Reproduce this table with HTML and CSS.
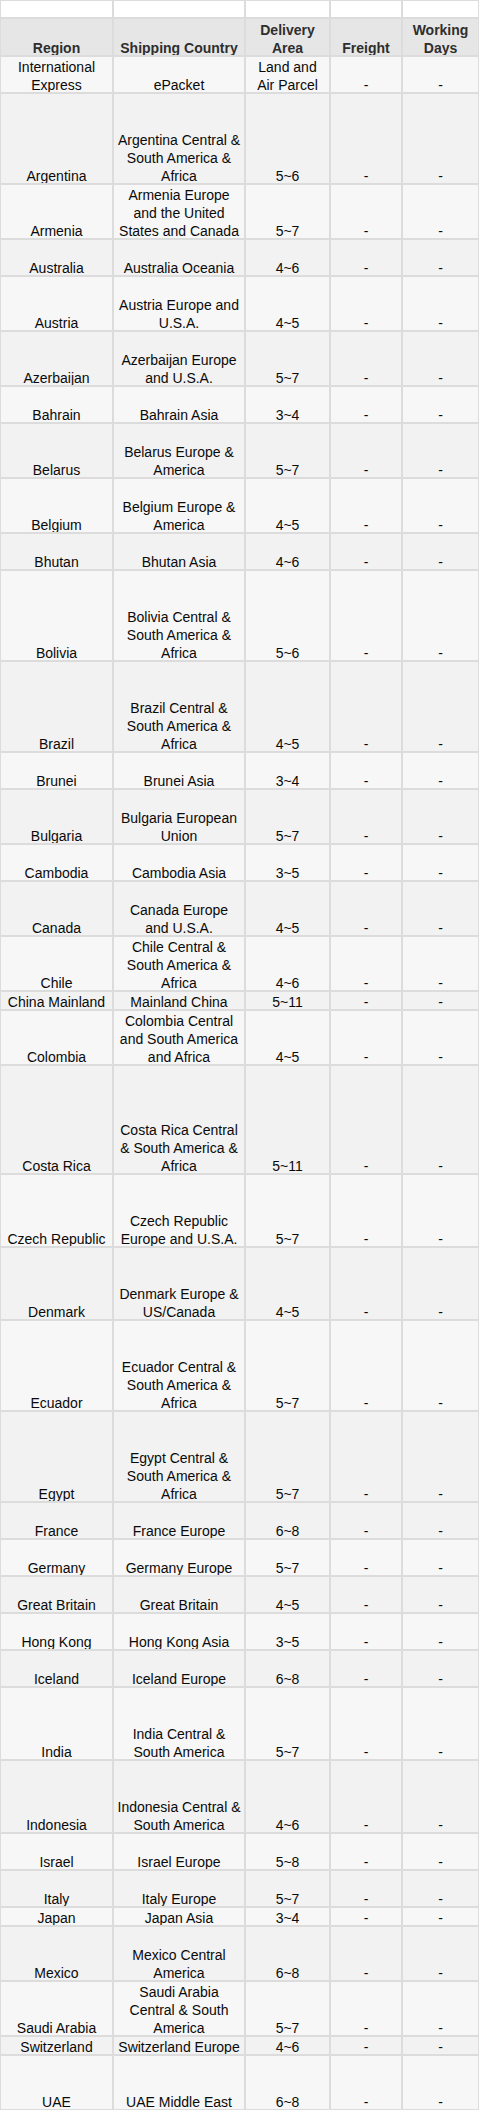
FILE: index.html
```html
<!DOCTYPE html>
<html lang="en">
<head>
<meta charset="utf-8">
<title>Shipping Table</title>
<link rel="stylesheet" href="styles.css">
</head>
<body>
<table class="ship">
  <colgroup>
    <col class="c1"><col class="c2"><col class="c3"><col class="c4"><col class="c5">
  </colgroup>
  <tbody>
    <tr class="blank"><td></td><td></td><td></td><td></td><td></td></tr>
    <tr class="head">
      <td><span>Region</span></td><td><span>Shipping Country</span></td><td><span>Delivery Area</span></td><td><span>Freight</span></td><td><span>Working Days</span></td>
    </tr>
    <tr class="lt h2"><td><span>International Express</span></td><td><span>ePacket</span></td><td><span>Land and Air Parcel</span></td><td><span>-</span></td><td><span>-</span></td></tr>
    <tr class="dk h5"><td><span>Argentina</span></td><td><span>Argentina Central &amp; South America &amp; Africa</span></td><td><span>5~6</span></td><td><span>-</span></td><td><span>-</span></td></tr>
    <tr class="lt h3"><td><span>Armenia</span></td><td><span>Armenia Europe and the United States and Canada</span></td><td><span>5~7</span></td><td><span>-</span></td><td><span>-</span></td></tr>
    <tr class="dk h2"><td><span>Australia</span></td><td><span>Australia Oceania</span></td><td><span>4~6</span></td><td><span>-</span></td><td><span>-</span></td></tr>
    <tr class="lt h3"><td><span>Austria</span></td><td><span>Austria Europe and U.S.A.</span></td><td><span>4~5</span></td><td><span>-</span></td><td><span>-</span></td></tr>
    <tr class="dk h3"><td><span>Azerbaijan</span></td><td><span>Azerbaijan Europe and U.S.A.</span></td><td><span>5~7</span></td><td><span>-</span></td><td><span>-</span></td></tr>
    <tr class="lt h2"><td><span>Bahrain</span></td><td><span>Bahrain Asia</span></td><td><span>3~4</span></td><td><span>-</span></td><td><span>-</span></td></tr>
    <tr class="dk h3"><td><span>Belarus</span></td><td><span>Belarus Europe &amp; America</span></td><td><span>5~7</span></td><td><span>-</span></td><td><span>-</span></td></tr>
    <tr class="lt h3"><td><span>Belgium</span></td><td><span>Belgium Europe &amp; America</span></td><td><span>4~5</span></td><td><span>-</span></td><td><span>-</span></td></tr>
    <tr class="dk h2"><td><span>Bhutan</span></td><td><span>Bhutan Asia</span></td><td><span>4~6</span></td><td><span>-</span></td><td><span>-</span></td></tr>
    <tr class="lt h5"><td><span>Bolivia</span></td><td><span>Bolivia Central &amp; South America &amp; Africa</span></td><td><span>5~6</span></td><td><span>-</span></td><td><span>-</span></td></tr>
    <tr class="dk h5"><td><span>Brazil</span></td><td><span>Brazil Central &amp; South America &amp; Africa</span></td><td><span>4~5</span></td><td><span>-</span></td><td><span>-</span></td></tr>
    <tr class="lt h2"><td><span>Brunei</span></td><td><span>Brunei Asia</span></td><td><span>3~4</span></td><td><span>-</span></td><td><span>-</span></td></tr>
    <tr class="dk h3"><td><span>Bulgaria</span></td><td><span>Bulgaria European Union</span></td><td><span>5~7</span></td><td><span>-</span></td><td><span>-</span></td></tr>
    <tr class="lt h2"><td><span>Cambodia</span></td><td><span>Cambodia Asia</span></td><td><span>3~5</span></td><td><span>-</span></td><td><span>-</span></td></tr>
    <tr class="dk h3"><td><span>Canada</span></td><td><span>Canada Europe and U.S.A.</span></td><td><span>4~5</span></td><td><span>-</span></td><td><span>-</span></td></tr>
    <tr class="lt h3"><td><span>Chile</span></td><td><span>Chile Central &amp; South America &amp; Africa</span></td><td><span>4~6</span></td><td><span>-</span></td><td><span>-</span></td></tr>
    <tr class="dk h1"><td><span>China Mainland</span></td><td><span>Mainland China</span></td><td><span>5~11</span></td><td><span>-</span></td><td><span>-</span></td></tr>
    <tr class="lt h3"><td><span>Colombia</span></td><td><span>Colombia Central and South America and Africa</span></td><td><span>4~5</span></td><td><span>-</span></td><td><span>-</span></td></tr>
    <tr class="dk h6"><td><span>Costa Rica</span></td><td><span>Costa Rica Central &amp; South America &amp; Africa</span></td><td><span>5~11</span></td><td><span>-</span></td><td><span>-</span></td></tr>
    <tr class="lt h4"><td><span>Czech Republic</span></td><td><span>Czech Republic Europe and U.S.A.</span></td><td><span>5~7</span></td><td><span>-</span></td><td><span>-</span></td></tr>
    <tr class="dk h4"><td><span>Denmark</span></td><td><span>Denmark Europe &amp; US/Canada</span></td><td><span>4~5</span></td><td><span>-</span></td><td><span>-</span></td></tr>
    <tr class="lt h5"><td><span>Ecuador</span></td><td><span>Ecuador Central &amp; South America &amp; Africa</span></td><td><span>5~7</span></td><td><span>-</span></td><td><span>-</span></td></tr>
    <tr class="dk h5"><td><span>Egypt</span></td><td><span>Egypt Central &amp; South America &amp; Africa</span></td><td><span>5~7</span></td><td><span>-</span></td><td><span>-</span></td></tr>
    <tr class="dk h2"><td><span>France</span></td><td><span>France Europe</span></td><td><span>6~8</span></td><td><span>-</span></td><td><span>-</span></td></tr>
    <tr class="lt h2"><td><span>Germany</span></td><td><span>Germany Europe</span></td><td><span>5~7</span></td><td><span>-</span></td><td><span>-</span></td></tr>
    <tr class="dk h2"><td><span>Great Britain</span></td><td><span>Great Britain</span></td><td><span>4~5</span></td><td><span>-</span></td><td><span>-</span></td></tr>
    <tr class="lt h2"><td><span>Hong Kong</span></td><td><span>Hong Kong Asia</span></td><td><span>3~5</span></td><td><span>-</span></td><td><span>-</span></td></tr>
    <tr class="dk h2"><td><span>Iceland</span></td><td><span>Iceland Europe</span></td><td><span>6~8</span></td><td><span>-</span></td><td><span>-</span></td></tr>
    <tr class="lt h4"><td><span>India</span></td><td><span>India Central &amp; South America</span></td><td><span>5~7</span></td><td><span>-</span></td><td><span>-</span></td></tr>
    <tr class="dk h4"><td><span>Indonesia</span></td><td><span>Indonesia Central &amp; South America</span></td><td><span>4~6</span></td><td><span>-</span></td><td><span>-</span></td></tr>
    <tr class="lt h2"><td><span>Israel</span></td><td><span>Israel Europe</span></td><td><span>5~8</span></td><td><span>-</span></td><td><span>-</span></td></tr>
    <tr class="dk h2"><td><span>Italy</span></td><td><span>Italy Europe</span></td><td><span>5~7</span></td><td><span>-</span></td><td><span>-</span></td></tr>
    <tr class="lt h1"><td><span>Japan</span></td><td><span>Japan Asia</span></td><td><span>3~4</span></td><td><span>-</span></td><td><span>-</span></td></tr>
    <tr class="dk h3"><td><span>Mexico</span></td><td><span>Mexico Central America</span></td><td><span>6~8</span></td><td><span>-</span></td><td><span>-</span></td></tr>
    <tr class="lt h3"><td><span>Saudi Arabia</span></td><td><span>Saudi Arabia Central &amp; South America</span></td><td><span>5~7</span></td><td><span>-</span></td><td><span>-</span></td></tr>
    <tr class="dk h1"><td><span>Switzerland</span></td><td><span>Switzerland Europe</span></td><td><span>4~6</span></td><td><span>-</span></td><td><span>-</span></td></tr>
    <tr class="lt h3"><td><span>UAE</span></td><td><span>UAE Middle East</span></td><td><span>6~8</span></td><td><span>-</span></td><td><span>-</span></td></tr>
  </tbody>
</table>
</body>
</html>
```
FILE: styles.css
```css
html, body {
  margin: 0;
  padding: 0;
  background: #ffffff;
}

.ship {
  margin: -1px;
  width: 481px;
  table-layout: fixed;
  border-collapse: separate;
  border-spacing: 2px;
  background: #dcdcdc;
  font-family: "Liberation Sans", Arial, sans-serif;
  font-size: 14px;
  line-height: 18px;
  color: #0a0a0a;
}

.c1 { width: 111px; }
.c2 { width: 130px; }
.c3 { width: 83px; }
.c4 { width: 70px; }
.c5 { width: 75px; }

.ship td {
  padding: 0 3px;
  text-align: center;
  vertical-align: bottom;
  overflow: hidden;
}

.ship td span {
  display: block;
  margin-bottom: -2px;
}

.blank td {
  height: 16px;
  background: #ffffff;
}

.head td {
  height: 36px;
  background: #e6e6e6;
  font-weight: bold;
  color: #2e2e2e;
}

.lt td { background: #f7f7f7; }
.dk td { background: #f2f2f2; }

.h1 td { height: 17px; }
.h2 td { height: 35px; }
.h3 td { height: 53px; }
.h4 td { height: 71px; }
.h5 td { height: 89px; }
.h6 td { height: 107px; }
```
